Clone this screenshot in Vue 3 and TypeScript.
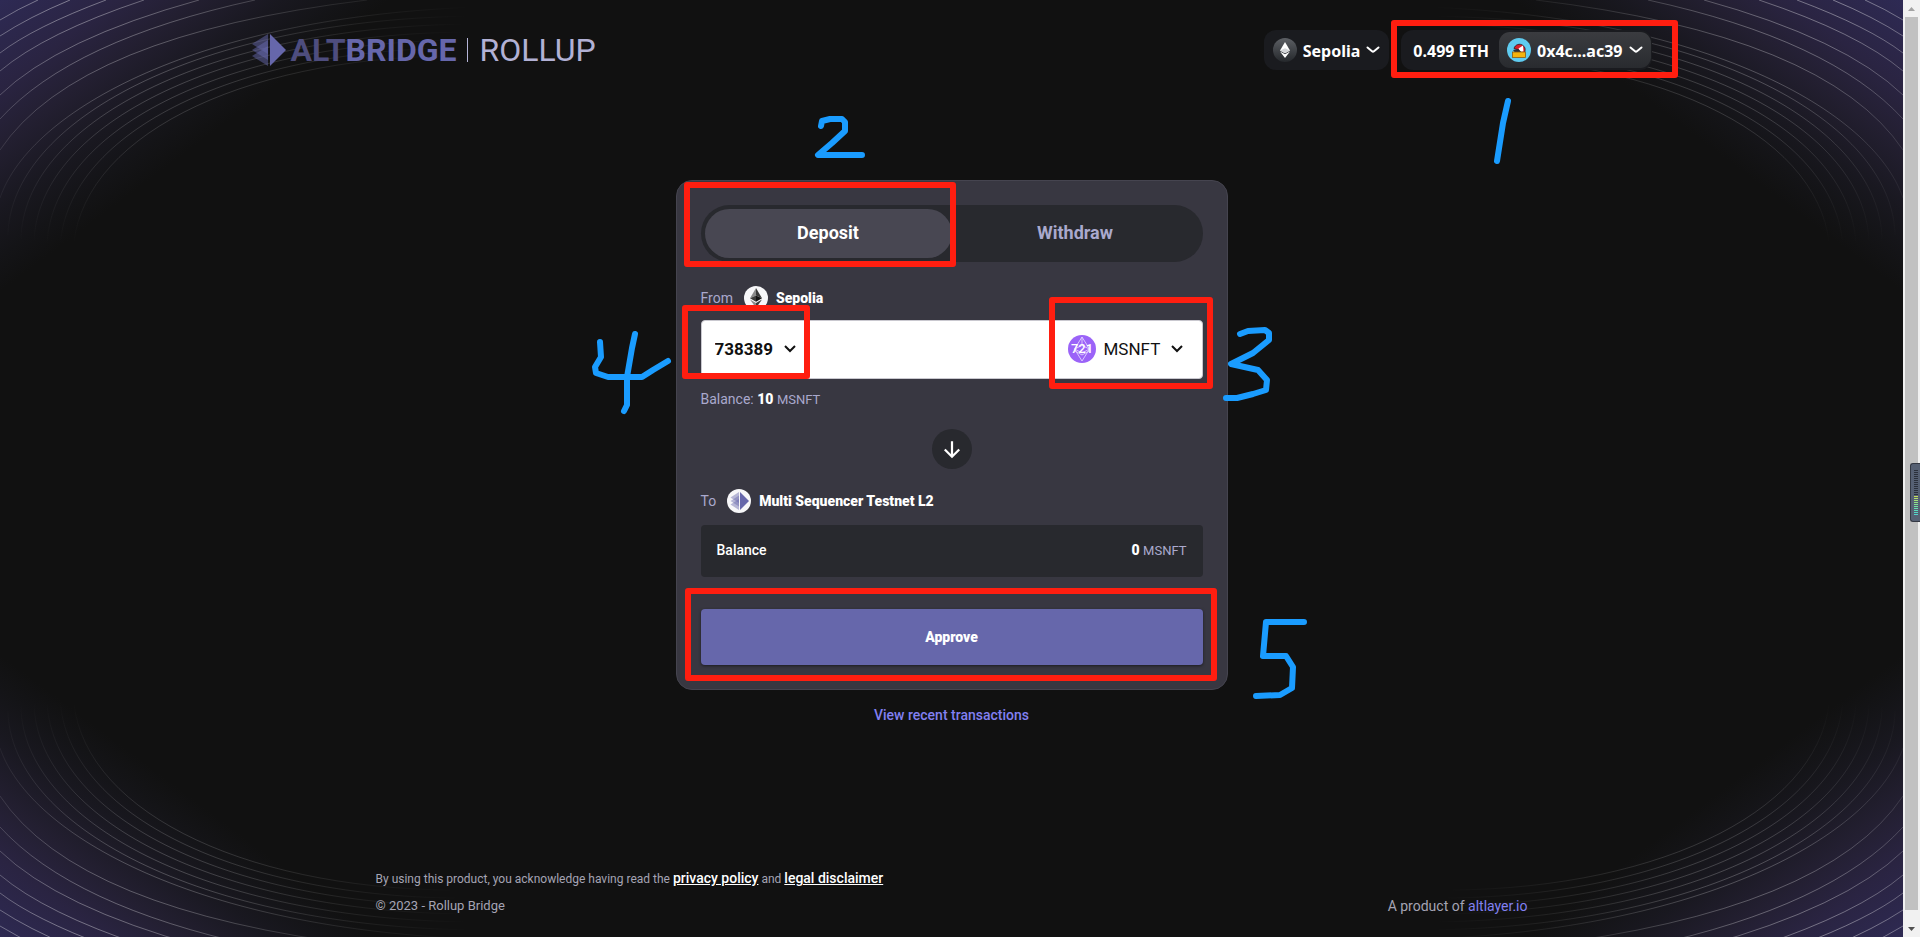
<script setup lang="ts">
import { ref } from 'vue'

type Mode = 'deposit' | 'withdraw'

const mode = ref<Mode>('deposit')
const tokenId = ref('738389')
const token = ref('MSNFT')

const innerArcs: string[] = Array.from({ length: 6 }, (_, i) => {
  const x = 73 - 13 * i
  const y = 56 - 8 * i
  return `M${x},${255 - 4 * i} C${x + 2},${138 - 3 * i} ${240 - 9 * i},${y + 2} ${450 + 6 * i},${y}`
})

const outerArcs: string[] = [
  'M0,198 C30,110 200,16 480,7',
  'M0,150 Q77,35 367,0',
  'M0,119 Q72,40 255,0',
  'M0,95 Q58,39 199,0',
  'M0,71 Q45,33 144,0',
  'M0,53 Q34,27 106,0',
  'M0,36 Q29,17 70,0',
  'M0,20 Q18,9 38,0',
]

const arcs = [...innerArcs, ...outerArcs]
const corners = ['top-left', 'top-right', 'bottom-left', 'bottom-right']
const meterBars = Array.from({ length: 23 }, (_, i) => i)

function meterColor(i: number): string {
  if (i < 13) return '#2b303b'
  return ['#c8e05a', '#b4e268', '#a2e478', '#90e486', '#80e494', '#72e2a2', '#66e0b0', '#5cdcbc', '#56d8c6', '#52d4cc'][i - 13]
}
</script>

<template>
  <div class="screen">
    <div class="page">
      <svg
        v-for="corner in corners"
        :key="corner"
        class="corner"
        :class="corner"
        viewBox="0 0 500 310"
        aria-hidden="true"
      >
        <defs>
          <linearGradient :id="`glow-${corner}`" gradientUnits="userSpaceOnUse" x1="0" y1="0" x2="140" y2="187">
            <stop offset="0" stop-color="#2e2a54" />
            <stop offset="0.3" stop-color="#2a2442" />
            <stop offset="0.5" stop-color="#231f31" />
            <stop offset="0.72" stop-color="#191820" />
            <stop offset="0.88" stop-color="#141417" />
            <stop offset="1" stop-color="#111111" />
          </linearGradient>
          <radialGradient :id="`line-${corner}`" gradientUnits="userSpaceOnUse" cx="0" cy="0" r="1" gradientTransform="translate(60 0) scale(410 245)">
            <stop offset="0" stop-color="#ffffff" stop-opacity="0.4" />
            <stop offset="0.3" stop-color="#ffffff" stop-opacity="0.27" />
            <stop offset="0.6" stop-color="#ffffff" stop-opacity="0.12" />
            <stop offset="0.8" stop-color="#ffffff" stop-opacity="0.05" />
            <stop offset="1" stop-color="#ffffff" stop-opacity="0" />
          </radialGradient>
        </defs>
        <rect width="500" height="310" :fill="`url(#glow-${corner})`" />
        <path v-for="d in arcs" :key="d" :d="d" fill="none" :stroke="`url(#line-${corner})`" />
      </svg>

      <header class="header">
        <a class="brand" href="#">
          <svg class="brand-mark" viewBox="0 0 34 32" aria-hidden="true">
            <g fill="#6667ab" fill-opacity="0.5">
              <path d="M16 0L0 10L16 20Z" />
              <path d="M16 6L0 16L16 26Z" />
              <path d="M16 12L0 22L16 32Z" />
            </g>
            <path d="M18 0L34 16L18 32Z" fill="#6667ab" />
          </svg>
          <span class="brand-name"><span class="brand-alt">ALT</span>BRIDGE</span>
          <span class="brand-rule"></span>
          <span class="brand-sub">ROLLUP</span>
        </a>

        <div class="wallet">
          <button class="pill network" type="button">
            <svg class="avatar" viewBox="0 0 24 24" aria-hidden="true">
              <defs>
                <linearGradient id="eth-disc" x1="0" y1="0" x2="0" y2="1">
                  <stop offset="0" stop-color="#5c5f64" />
                  <stop offset="1" stop-color="#25282c" />
                </linearGradient>
              </defs>
              <circle cx="12" cy="12" r="12" fill="url(#eth-disc)" />
              <path d="M12 4L7 12.4L12 15.2L17 12.4Z" fill="#fff" />
              <path d="M12 16.3L7 13.5L12 20L17 13.5Z" fill="#fff" />
              <path d="M12 10.2L7 12.4L12 15.2L17 12.4Z" fill="#d4d6d9" />
            </svg>
            <span class="pill-text">Sepolia</span>
            <svg class="chevron" viewBox="0 0 14 8" aria-hidden="true"><path d="M1.5 1.5L6 5.2Q7 6 8 5.2L12.500 1.500" /></svg>
          </button>
          <div class="pill account">
            <span class="funds pill-text">0.499 ETH</span>
            <button class="address" type="button">
              <svg class="avatar" viewBox="0 0 24 24" aria-hidden="true">
                <circle cx="12" cy="12" r="12" fill="#5fcbf0" />
                <path d="M7 10.500C8 6.500 13 5 16 7.500C18.500 9.500 18.500 12 17.500 14.500L13 14.500L12 12Z" fill="#d8202c" stroke="#301417" stroke-width="0.8" />
                <path d="M11.500 10.500L16 7.500L16.500 13.500L13.500 14Z" fill="#fff" />
                <path d="M6 12L11 11L15 14.500L8 14.500Z" fill="#28303a" />
                <rect x="5.500" y="14" width="13" height="5.500" fill="#f5b30c" stroke="#8a5a10" stroke-width="0.8" />
              </svg>
              <span class="pill-text">0x4c...ac39</span>
              <svg class="chevron" viewBox="0 0 14 8" aria-hidden="true"><path d="M1.5 1.5L6 5.2Q7 6 8 5.2L12.500 1.500" /></svg>
            </button>
          </div>
        </div>
      </header>

      <main class="main">
        <section class="card">
          <div class="tabs" role="tablist">
            <button class="tab" :class="{ active: mode === 'deposit' }" type="button" role="tab" :aria-selected="mode === 'deposit'" @click="mode = 'deposit'">Deposit</button>
            <button class="tab" :class="{ active: mode === 'withdraw' }" type="button" role="tab" :aria-selected="mode === 'withdraw'" @click="mode = 'withdraw'">Withdraw</button>
          </div>

          <div class="chain-row">
            <span>From</span>
            <svg class="chain-icon" viewBox="0 0 24 24" aria-hidden="true">
              <circle cx="12" cy="12" r="12" fill="#f7f7f9" />
              <path d="M12 2L6 12.200L12 9.500Z" fill="#8b8b8b" />
              <path d="M12 2L18 12.200L12 9.500Z" fill="#3a3a3a" />
              <path d="M12 9.500L6 12.200L12 15.800Z" fill="#3c3c3b" />
              <path d="M12 9.500L18 12.200L12 15.800Z" fill="#141414" />
              <path d="M6 13.400L12 17L12 22Z" fill="#8b8b8b" />
              <path d="M18 13.400L12 17L12 22Z" fill="#3c3c3b" />
            </svg>
            <strong>Sepolia</strong>
          </div>

          <div class="asset-field">
            <label class="picker">
              <select v-model="tokenId" class="select token-id" aria-label="Token ID">
                <option>738389</option>
              </select>
              <svg class="caret" viewBox="0 0 12 8" aria-hidden="true"><path d="M1 1L6 6L11 1" /></svg>
            </label>
            <label class="picker">
              <svg class="token-icon" viewBox="0 0 28 28" aria-hidden="true">
                <circle cx="14" cy="14" r="14" fill="#9b63f8" />
                <path d="M14 2L6.500 14L14 26L21.500 14ZM6.500 14L14 10.500L21.500 14L14 18ZM7 16L14 20L21 16M14 2V10" fill="none" stroke="#e2d2ff" stroke-width="0.9" />
                <text x="14" y="18" text-anchor="middle" class="token-text">721</text>
              </svg>
              <select v-model="token" class="select" aria-label="Token">
                <option>MSNFT</option>
              </select>
              <svg class="caret" viewBox="0 0 12 8" aria-hidden="true"><path d="M1 1L6 6L11 1" /></svg>
            </label>
          </div>

          <p class="balance">Balance: <strong>10</strong> <span class="unit">MSNFT</span></p>

          <button class="swap" type="button" aria-label="Swap direction">
            <svg viewBox="0 0 18 18" aria-hidden="true"><path d="M9 2V16M2.500 9.500L9 16L15.500 9.500" /></svg>
          </button>

          <div class="chain-row">
            <span>To</span>
            <svg class="chain-icon" viewBox="0 0 24 24" aria-hidden="true">
              <circle cx="12" cy="12" r="12" fill="#f7f7f9" />
              <g fill="#6667ab" fill-opacity="0.45">
                <path d="M12 3L3.500 8.500L12 14Z" />
                <path d="M12 6.500L3.500 12L12 17.500Z" />
                <path d="M12 10L3.500 15.500L12 21Z" />
              </g>
              <path d="M13 3L22 12L13 21Z" fill="#6667ab" />
            </svg>
            <strong>Multi Sequencer Testnet L2</strong>
          </div>

          <div class="receive">
            <span class="receive-label">Balance</span>
            <span><strong>0</strong> <span class="unit">MSNFT</span></span>
          </div>

          <button class="approve" type="button">Approve</button>
        </section>

        <a class="recent" href="#">View recent transactions</a>
      </main>

      <footer class="footer">
        <p class="legal">
          By using this product, you acknowledge having read the
          <a href="#">privacy policy</a> and <a href="#">legal disclaimer</a>
        </p>
        <div class="footer-row">
          <span class="copyright">© 2023 - Rollup Bridge</span>
          <span>A product of <a href="#">altlayer.io</a></span>
        </div>
      </footer>
    </div>

    <div class="scrollbar" aria-hidden="true">
      <svg class="scroll-arrow" viewBox="0 0 17 17"><path d="M5 11L8.500 7L12 11Z" fill="#a3a3a3" /></svg>
      <div class="thumb"></div>
      <svg class="scroll-arrow" viewBox="0 0 17 17"><path d="M5 7L8.500 11L12 7Z" fill="#505050" /></svg>
    </div>

    <div class="meter" aria-hidden="true">
      <span v-for="bar in meterBars" :key="bar" class="meter-bar" :style="{ background: meterColor(bar) }"></span>
    </div>

    <svg class="notes" viewBox="0 0 1920 937" aria-hidden="true">
      <g fill="none" stroke="#ff1e10" stroke-width="6" stroke-linejoin="round">
        <rect x="1394" y="23" width="281" height="52" />
        <rect x="687" y="185" width="266" height="79" />
        <rect x="1052" y="300" width="158" height="86" />
        <rect x="685" y="308" width="122" height="68" />
        <rect x="688" y="591" width="526" height="87" />
      </g>
      <g fill="none" stroke="#1a9cff" stroke-width="6" stroke-linecap="round" stroke-linejoin="round">
        <path d="M1508 101L1503 123L1500 142L1497 161" />
        <path d="M821 126L822 121L830 119H842L845 122V131L832 143L818 155H862" />
        <path d="M1240 334L1248 331L1265 330L1269 333V340L1253 353L1231 364L1258 370L1267 380L1266 390L1253 394L1237 398H1226" />
        <path d="M600 342L601 357L595 367L596 373L608 377H642L653 370L668 361M635 334L632 348L627 377V405L624 411" />
        <path d="M1304 622H1266L1263 656H1286L1293 667L1292 688L1280 695L1256 696" />
      </g>
    </svg>
  </div>
</template>

<style>
html,
body {
  margin: 0;
  background: #111111;
}
</style>

<style scoped>
.screen {
  position: relative;
  display: flex;
  min-height: 100vh;
  overflow: hidden;
  font-family: Roboto, 'Liberation Sans', sans-serif;
  font-size: 14px;
  line-height: 20px;
  color: #aaa9cd;
}

button,
select {
  margin: 0;
  border: 0;
  font: inherit;
  color: inherit;
  cursor: pointer;
}

a {
  text-decoration: none;
}

strong {
  font-weight: 900;
  color: #fff;
}

.page {
  position: relative;
  flex: 1;
  display: flex;
  flex-direction: column;
  background: #111111;
}

.corner {
  position: absolute;
  width: 500px;
  height: 310px;
}

.top-left {
  top: 0;
  left: 0;
}

.top-right {
  top: 0;
  right: 0;
  transform: scaleX(-1);
}

.bottom-left {
  bottom: -9px;
  left: 0;
  transform: scaleY(-1);
}

.bottom-right {
  right: 0;
  bottom: -9px;
  transform: scale(-1, -1);
}

.header {
  position: relative;
  display: flex;
  align-items: center;
  justify-content: space-between;
  box-sizing: border-box;
  width: 100%;
  max-width: 1400px;
  height: 100px;
  margin: 0 auto;
}

.brand {
  display: flex;
  align-items: center;
  font-size: 32px;
  line-height: 32px;
}

.brand-mark {
  width: 34px;
  height: 32px;
  margin-right: 5px;
}

.brand-name {
  font-weight: 700;
  color: #6667ab;
}

.brand-alt {
  color: #4e4d7e;
}

.brand-rule {
  width: 1px;
  height: 24px;
  margin: 0 11px;
  background: #b5b4d8;
}

.brand-sub {
  color: #b2b1d5;
}

.wallet {
  display: flex;
  gap: 12px;
  font-family: 'Noto Sans', 'Open Sans', sans-serif;
  font-size: 16px;
  font-weight: 700;
  color: #fff;
}

.pill {
  display: flex;
  align-items: center;
  height: 40px;
  border-radius: 12px;
  background: #1a1b1f;
}

.pill-text {
  padding-top: 2px;
}

.network {
  gap: 6px;
  padding: 0 9px;
}

.avatar {
  width: 24px;
  height: 24px;
}

.chevron {
  width: 14px;
  height: 8px;
  fill: none;
  stroke: #fff;
  stroke-width: 2;
  stroke-linecap: round;
}

.funds {
  padding-right: 10px;
  padding-left: 12px;
}

.address {
  display: flex;
  align-items: center;
  gap: 6px;
  height: 36px;
  margin-right: 1px;
  padding: 0 8px;
  border-radius: 11px;
  background: linear-gradient(#3b3c40, #292b2f);
}

.main {
  position: relative;
  display: flex;
  flex-direction: column;
  align-items: center;
  padding: 80px 0 0;
}

.card {
  display: flex;
  flex-direction: column;
  box-sizing: border-box;
  width: 100%;
  max-width: 552px;
  padding: 24px;
  border: 1px solid #45444f;
  border-radius: 16px;
  background: #383741;
}

.tabs {
  display: flex;
  box-sizing: border-box;
  height: 57px;
  padding: 4px;
  border-radius: 29px;
  background: #28292e;
}

.tab {
  flex: 1;
  padding: 0 0 2px;
  border-radius: 25px;
  background: transparent;
  font-size: 18px;
  font-weight: 700;
}

.tab.active {
  background: #484752;
  color: #fff;
}

.chain-row {
  display: flex;
  align-items: center;
  height: 24px;
  margin-top: 24px;
}

.chain-icon {
  width: 24px;
  height: 24px;
  margin: 0 8px 0 11px;
}

.asset-field {
  display: flex;
  align-items: center;
  justify-content: space-between;
  box-sizing: border-box;
  height: 59px;
  margin-top: 10px;
  padding: 0 19px 2px 13px;
  border: 1px solid #c9c8cf;
  border-radius: 4px;
  background: #fff;
  color: #111;
}

.picker {
  display: flex;
  align-items: center;
}

.select {
  padding: 0;
  appearance: none;
  background: transparent;
  font-size: 17px;
}

.token-id {
  font-weight: 700;
}

.caret {
  width: 12px;
  height: 8px;
  margin-left: 10px;
  fill: none;
  stroke: #111;
  stroke-width: 2;
}

.token-icon {
  width: 28px;
  height: 28px;
  margin-right: 8px;
}

.token-text {
  font-size: 13px;
  font-weight: 500;
  fill: #fff;
}

.unit {
  font-size: 13px;
}

.balance {
  margin: 10px 0 0;
}

.swap {
  display: flex;
  align-items: center;
  justify-content: center;
  align-self: center;
  width: 40px;
  height: 40px;
  margin: 19px 0 -4px;
  padding: 0;
  border-radius: 50%;
  background: #28292e;
}

.swap svg {
  width: 20px;
  height: 20px;
  fill: none;
  stroke: #fff;
  stroke-width: 2;
}

.receive {
  display: flex;
  align-items: center;
  justify-content: space-between;
  box-sizing: border-box;
  height: 52px;
  margin-top: 12px;
  padding: 0 16px 2px;
  border-radius: 4px;
  background: #28292e;
}

.receive-label {
  font-weight: 500;
  color: #fff;
}

.approve {
  height: 56px;
  margin-top: 32px;
  border-radius: 4px;
  background: #6667ab;
  box-shadow: 0 1px 3px rgba(0, 0, 0, 0.5);
  font-weight: 900;
  color: #fff;
}

.recent {
  margin-top: 15px;
  font-weight: 500;
  color: #8280f2;
}

.footer {
  position: relative;
  box-sizing: border-box;
  width: 100%;
  max-width: 1152px;
  margin: auto auto 0;
  padding-bottom: 21px;
  color: #a5a4b4;
}

.legal {
  margin: 0;
  font-size: 12px;
}

.legal a {
  font-size: 14px;
  font-weight: 500;
  color: #fff;
  text-decoration: underline;
}

.footer-row {
  display: flex;
  justify-content: space-between;
  margin-top: 7px;
}

.copyright {
  font-size: 13px;
}

.footer-row a {
  color: #8280f2;
}

.scrollbar {
  display: flex;
  flex-direction: column;
  width: 17px;
  background: #f1f1f1;
}

.scroll-arrow {
  width: 17px;
  height: 17px;
}

.thumb {
  flex: 1;
  margin: 0 2px 10px;
  background: #c1c1c1;
}

.meter {
  position: absolute;
  top: 463px;
  right: 0;
  display: flex;
  flex-direction: column;
  gap: 1px;
  box-sizing: border-box;
  height: 59px;
  padding: 6px 2px 0 3px;
  border: 1px solid #343944;
  border-right: 0;
  border-radius: 3px 0 0 3px;
  background: #566073;
}

.meter-bar {
  width: 4px;
  height: 1px;
}

.notes {
  position: absolute;
  top: 0;
  left: 0;
  width: 1920px;
  height: 937px;
  pointer-events: none;
}
</style>
